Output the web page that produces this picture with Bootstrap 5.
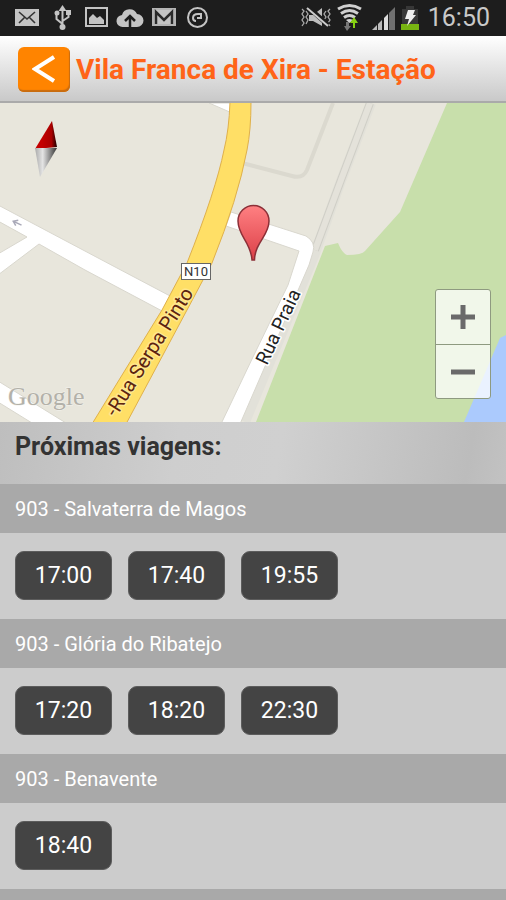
<!DOCTYPE html>
<html lang="pt">
<head>
<meta charset="utf-8">
<meta name="viewport" content="width=device-width, initial-scale=1">
<title>Vila Franca de Xira - Estação</title>
<link href="https://cdn.jsdelivr.net/npm/bootstrap@5.3.0/dist/css/bootstrap.min.css" rel="stylesheet">
<style>
body { font-family: Roboto, "Noto Sans", sans-serif; background: #ccc; }
.status-bar { background: #1d1d1d; color: #c9c9c9; height: 36px; padding: 0 16px 0 14px; }
.status-bar svg { display: block; flex: none; }
.status-clock { font-size: 25px; line-height: 36px; }
.title-bar { height: 67px; padding: 2px 18px 0; gap: 6px; background: linear-gradient(#fff, #e9e9e9 40%, #c9c9c9); border-bottom: 2px solid #aaa; }
.title-bar h1 { font-size: 28px; line-height: 36px; font-weight: 700; color: #ff6418; }
.back-btn { width: 52px; height: 45px; padding: 0; background: #ff8400; border: 0; border-radius: 6px; box-shadow: inset -1px -2px 1px #c86c10; }
.back-btn:hover { background: #f07c00; }
.map-svg { display: block; width: 100%; height: auto; }
.map-zoom { right: 15px; bottom: 23px; width: 56px; border: 1px solid #8e9a80; border-radius: 3px; background: rgba(255,255,255,.75); }
.map-zoom button { height: 54px; padding: 0; border: 0; border-radius: 0; line-height: 1; }
.map-zoom button + button { border-top: 1px solid #8e9a80; }
.trips-title { padding: 7px 15px 19px; background: linear-gradient(100deg, #bebebe, #cecece 35%, #d0d0d0 55%, #bcbcbc 92%, #c2c2c2); }
.trips-title h2 { font-size: 25px; line-height: 36px; font-weight: 700; color: #333; }
.route-name { font-size: 20px; line-height: 29px; padding: 11px 15px 9px; font-weight: 400; color: #fff; background: #a9a9a9; }
.route-times { padding: 18px 15px 19px; gap: 16px; }
.time-btn { width: 97px; height: 49px; padding: 0; font-size: 23px; line-height: 48px; color: #fff; background: #444; border: 1px solid #5c5c5c; border-radius: 9px; }
.time-btn:hover { color: #fff; background: #333; }
</style>
</head>
<body>
<div class="status-bar d-flex align-items-center justify-content-between overflow-hidden">
  <div class="d-flex align-items-center" aria-hidden="true">
    <svg width="194" height="36" viewBox="14 0 194 36">
      <rect x="15" y="9" width="24" height="17" fill="#c4c4c4"/>
      <path d="M19 12l8 7 8-7M19 23l6-6M35 23l-6-6" fill="none" stroke="#333" stroke-width="1.600"/>
      <path d="M62.500 9v19M62.500 24l-6-5v-5M62.500 21l6-4v-5" fill="none" stroke="#c4c4c4" stroke-width="2"/>
      <path d="M62.500 5l4 6h-8z" fill="#c4c4c4"/><circle cx="62.500" cy="27" r="3" fill="#c4c4c4"/><circle cx="57" cy="13" r="2.500" fill="#c4c4c4"/><path d="M66 10h5v5h-5z" fill="#c4c4c4"/>
      <rect x="86" y="8" width="21" height="18" fill="none" stroke="#c4c4c4" stroke-width="2"/>
      <path d="M89 24v-6l4-4 4 4 3-2 4 4v4z" fill="#c4c4c4"/>
      <path d="M123 27a6 6 0 0 1-1-12 8 8 0 0 1 15-1 6.500 6.500 0 0 1 0 13z" fill="#c4c4c4"/>
      <path d="M130 28V18M125 21l5-5 5 5" fill="none" stroke="#1d1d1d" stroke-width="2.500"/>
      <rect x="153" y="9" width="22" height="16" fill="#c4c4c4" stroke="#b4b4b4" stroke-width="2"/>
      <path d="M156 24V12l8 8 8-8v12" fill="none" stroke="#2a2a2a" stroke-width="2.500"/>
      <circle cx="197.500" cy="17.500" r="9.500" fill="none" stroke="#c4c4c4" stroke-width="2"/>
      <path d="M196 21q-3 0-3-3 0-4 5-4h3v4h-4" fill="none" stroke="#c4c4c4" stroke-width="2"/>
    </svg>
  </div>
  <div class="d-flex align-items-center gap-2">
    <svg width="119" height="36" viewBox="302 0 119 36" aria-hidden="true">
      <path d="M303 9l2 2-2 3 2 3-2 3 2 3-2 3M307 11l2 3-2 3 2 3-2 4M331 9l-2 2 2 3-2 3 2 3-2 3 2 3M327 11l-2 3 2 3-2 3 2 4" fill="none" stroke="#aaa" stroke-width="1.300"/>
      <path d="M310 15h4l9-7v18l-9-5h-4z" fill="#bdbdbd"/>
      <path d="M309 7l20 18" stroke="#1d1d1d" stroke-width="5"/><path d="M308 8l21 18" stroke="#ccc" stroke-width="2"/>
      <path d="M339 9q11.500-7 23 0M342 13.500q8.500-6 17 0M345 17.500q5.500-4 11 0" fill="none" stroke="#d0d0d0" stroke-width="3"/>
      <path d="M347 20q3.500-2 7 0l-3.500 3z" fill="#d0d0d0"/>
      <path d="M347 22h3v4h2l-4 5-3-5h2z" fill="#777"/>
      <path d="M354 28v-5h-3l4-6 4 6h-3v5z" fill="#86cf12"/>
      <path d="M373 30l5-5v5z" fill="#bbb"/><path d="M379 24l4-4v10h-4z" fill="#bbb"/><path d="M385 18l4-4v16h-4z" fill="#ddd"/><path d="M390 13l6-6v23h-6z" fill="#707070"/>
      <path d="M403 9h4V6h8v3h4v21h-16z" fill="#383838"/>
      <path d="M402 24h18v6h-18z" fill="#78b512"/>
      <path d="M409 10h7l-2 5h3l-9 11 2-7h-4z" fill="#eee"/>
    </svg>
    <span class="status-clock">16:50</span>
  </div>
</div>

<header class="title-bar d-flex align-items-center">
  <button type="button" class="btn back-btn flex-shrink-0" aria-label="Voltar">
    <svg width="24" height="32" viewBox="0 0 24 32" aria-hidden="true"><path d="M22 3L3 15l19 12" fill="none" stroke="#fff" stroke-width="4"/></svg>
  </button>
  <h1 class="m-0 text-nowrap">Vila Franca de Xira - Estação</h1>
</header>

<main>
  <section class="position-relative" aria-label="Mapa">
    <svg class="map-svg" viewBox="0 103 506 319" font-family="Roboto, sans-serif">
      <defs>
        <linearGradient id="pinFill" x1="0" y1="0" x2="0" y2="1"><stop offset="0" stop-color="#ff8082"/><stop offset="1" stop-color="#dc4048"/></linearGradient>
        <linearGradient id="needleRed"><stop offset="0.300" stop-color="#c40000"/><stop offset="0.750" stop-color="#a80000"/><stop offset="1" stop-color="#1a0000"/></linearGradient>
        <linearGradient id="needleGrey"><stop offset="0" stop-color="#aaa"/><stop offset="0.350" stop-color="#e4e4e4"/><stop offset="1" stop-color="#333"/></linearGradient>
      </defs>
      <rect y="103" width="506" height="319" fill="#e8e6dc"/>
      <path d="M447 103L400 212 365 251Q362 255 347 255 342 253 338 243L325 246 256 422H506V103z" fill="#c8dfab"/>
      <path d="M506 335L500 338 464 422H506z" fill="#abcafd"/>
      <path d="M371 103L341 181 314 256 245 422" fill="none" stroke="#e2e1d9" stroke-width="10"/>
      <path d="M370 103L341 180 315 250" fill="none" stroke="#d0cfc7" stroke-width="8"/>
      <path d="M370 103L341 180 315 250" fill="none" stroke="#e4e2da" stroke-width="6"/>
      <path d="M333 103L307 170Q303 179 292 176L242 163" fill="none" stroke="#dbd9cf" stroke-width="4"/>
      <g fill="#fff" stroke="#d9d7ce" stroke-width="1">
        <path d="M-2 205L117 268 172 297 164 312 85 270 39 244 -2 275V254L27 237-2 221z"/>
        <path d="M-2 381L66 423H32L-2 402z"/>
        <path d="M209 103H232V113z"/>
        <path d="M231 212L306 236Q316 242 313 252L309 265 240 424H221L253 357 288 285 299 251 226 226z"/>
      </g>
      <path d="M230 102Q229 130 224 150Q216 190 187 263L162 310 92 424H126L187 310 212 263Q238 198 247 150 251 130 251 102z" fill="#ffdf66" stroke="#dfb04b" stroke-width="1"/>
      <path d="M12 223h10M13 223l4-3M13 223l4 3" fill="none" stroke="#a9a9b8" stroke-width="1.500" transform="rotate(25 17 223)"/>
      <rect x="181.500" y="263.500" width="29" height="16" fill="#fff" stroke="#666"/>
      <text x="196" y="276" font-size="13" text-anchor="middle" fill="#333">N10</text>
      <g stroke-linejoin="round" paint-order="stroke">
        <text font-size="20" fill="#5c2310" stroke="#ffe78c" stroke-width="3" transform="translate(116 418) rotate(-58)">-Rua Serpa Pinto</text>
        <text font-size="19" fill="#222" stroke="#fff" stroke-width="3" transform="translate(267 366) rotate(-65)">Rua Praia</text>
      </g>
      <text x="8" y="405" font-family="Liberation Serif, serif" font-size="26" fill="#b3b1a9" stroke="#f3f2ed" stroke-width="1" paint-order="stroke">Google</text>
      <path d="M52 121L57 147 35 149z" fill="url(#needleRed)"/>
      <path d="M35 148H57L40 177z" fill="url(#needleGrey)"/>
      <path d="M252 260C251 242 238 236 238 221A15.500 15.500 0 0 1 269 221C269 236 255 242 254.500 260z" fill="url(#pinFill)" stroke="#8c3038" stroke-width="1.500"/>
    </svg>
    <div class="map-zoom position-absolute d-flex flex-column">
      <button type="button" class="btn" aria-label="Aumentar zoom"><svg width="24" height="24" viewBox="0 0 24 24" aria-hidden="true"><path d="M0 12h24M12 0v24" stroke="#6a6a6a" stroke-width="5"/></svg></button>
      <button type="button" class="btn" aria-label="Diminuir zoom"><svg width="24" height="24" viewBox="0 0 24 24" aria-hidden="true"><path d="M0 12h24" stroke="#6a6a6a" stroke-width="5"/></svg></button>
    </div>
  </section>

  <div class="trips-title"><h2 class="m-0">Próximas viagens:</h2></div>

  <section>
    <h3 class="route-name m-0">903 - Salvaterra de Magos</h3>
    <div class="route-times d-flex flex-wrap">
      <button type="button" class="btn time-btn">17:00</button>
      <button type="button" class="btn time-btn">17:40</button>
      <button type="button" class="btn time-btn">19:55</button>
    </div>
  </section>
  <section>
    <h3 class="route-name m-0">903 - Glória do Ribatejo</h3>
    <div class="route-times d-flex flex-wrap">
      <button type="button" class="btn time-btn">17:20</button>
      <button type="button" class="btn time-btn">18:20</button>
      <button type="button" class="btn time-btn">22:30</button>
    </div>
  </section>
  <section>
    <h3 class="route-name m-0">903 - Benavente</h3>
    <div class="route-times d-flex flex-wrap">
      <button type="button" class="btn time-btn">18:40</button>
    </div>
  </section>
  <div class="route-name py-0 pt-2 pb-1" aria-hidden="true"></div>
</main>
<script src="https://cdn.jsdelivr.net/npm/bootstrap@5.3.0/dist/js/bootstrap.bundle.min.js"></script>
</body>
</html>
